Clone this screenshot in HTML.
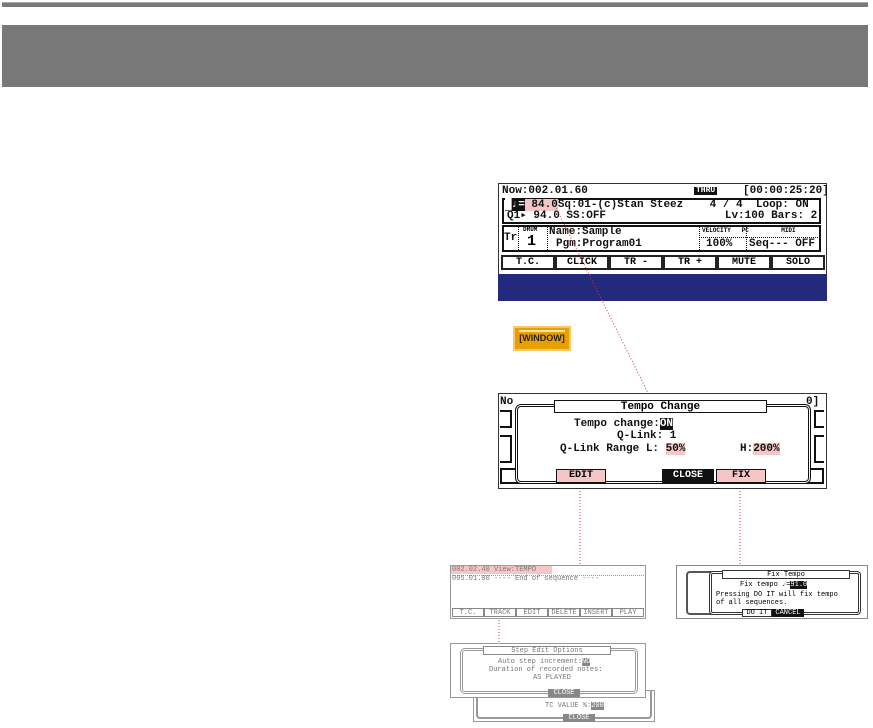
<!DOCTYPE html>
<html><head><meta charset="utf-8"><style>
*{margin:0;padding:0;box-sizing:border-box}
body{width:873px;height:728px;background:#fff;position:relative;overflow:hidden;font-family:"Liberation Mono",monospace}
.a{position:absolute}
.t{position:absolute;white-space:pre;line-height:1}
.m{font-size:11px;color:#111;font-weight:bold}
.g{color:#777;font-size:7px}
.pk{background:#f6c6c6}
.bk{background:#111;color:#fff}
.btn{position:absolute;border:2px solid #222;text-align:center;font-size:10px;line-height:11px;font-weight:bold}
.gb{position:absolute;border:1px solid #888;text-align:center;font-size:7px;line-height:8px;color:#777}
</style></head><body>
<div class="a" style="left:2px;top:2px;width:866px;height:5px;background:#7a7a7a;border-top:1px solid #aaa"></div>
<div class="a" style="left:2px;top:25px;width:866px;height:62px;background:#787878"></div>

<!-- main LCD -->
<div class="a" style="left:498px;top:183px;width:329px;height:92px;background:#fff;border:1px solid #333"></div>
<div class="a" style="left:498px;top:274px;width:329px;height:27px;background:#232a7c"></div>
<div class="t m" style="left:502px;top:186px">Now:002.01.60</div>
<div class="t" style="left:694px;top:187px;font-size:8px;background:#111;color:#fff;padding:0 2px;font-weight:bold">THRU</div>
<div class="t m" style="left:743px;top:186px">[00:00:25:20]</div>
<div class="a" style="left:502px;top:198px;width:319px;height:26px;border:2px solid #111"></div>
<div class="t m" style="left:505px;top:200px"><span class="bk">&#9608;&#9833;=</span><span class="pk"> 84.0</span>Sq:01-(c)Stan Steez    4 / 4  Loop: ON</div>
<div class="t m" style="left:507px;top:211px">Q1&#9656; 94.0 SS:OFF                  Lv:100 Bars: 2</div>
<div class="a" style="left:502px;top:225px;width:319px;height:27px;border:2px solid #111"></div>
<div class="t m" style="left:504px;top:233px">Tr</div>
<div class="a" style="left:518px;top:227px;height:23px;border-left:1px dotted #111"></div>
<div class="t" style="left:523px;top:227px;font-size:6px;font-weight:bold">DRUM</div>
<div class="t" style="left:527px;top:234px;font-size:15px;font-weight:bold">1</div>
<div class="a" style="left:547px;top:227px;height:23px;border-left:1px dotted #111"></div>
<div class="t m" style="left:549px;top:227px">Name:Sample</div>
<div class="t m" style="left:556px;top:239px">Pgm:Program01</div>
<div class="a" style="left:699px;top:227px;height:23px;border-left:1px dotted #111"></div>
<div class="t" style="left:702px;top:228px;font-size:6px;font-weight:bold">VELOCITY   PC         MIDI</div>
<div class="a" style="left:699px;top:237px;width:121px;border-top:1px dotted #111"></div>
<div class="t m" style="left:706px;top:239px">100%</div>
<div class="a" style="left:746px;top:227px;height:23px;border-left:1px dotted #111"></div>
<div class="t m" style="left:749px;top:239px">Seq--- OFF</div>
<div class="btn" style="left:501px;top:255px;width:54px;height:15px">T.C.</div>
<div class="btn" style="left:555px;top:255px;width:54px;height:15px">CLICK</div>
<div class="btn" style="left:609px;top:255px;width:54px;height:15px">TR -</div>
<div class="btn" style="left:663px;top:255px;width:54px;height:15px">TR +</div>
<div class="btn" style="left:717px;top:255px;width:54px;height:15px">MUTE</div>
<div class="btn" style="left:771px;top:255px;width:54px;height:15px">SOLO</div>

<!-- window button -->
<div class="a" style="left:513px;top:326px;width:58px;height:25px;background:#e8a000;border:2px solid #f6c86a;font-family:'Liberation Sans',sans-serif;font-size:9px;text-align:center;line-height:21px;color:#222;font-weight:bold"><div class="a" style="left:4px;top:2px;width:46px;height:2px;background:#f8e2b0"></div>[WINDOW]</div>

<!-- dotted lines -->
<svg class="a" style="left:0;top:0" width="873" height="728">
<g stroke="#d33" stroke-width="1" stroke-dasharray="1,2" fill="none">
<line x1="556" y1="208" x2="650" y2="397"/>
<line x1="580" y1="488" x2="580" y2="567"/>
<line x1="740" y1="488" x2="740" y2="567"/>
<line x1="499" y1="575" x2="499" y2="650"/>
</g></svg>

<!-- tempo change LCD -->
<div class="a" style="left:498px;top:393px;width:329px;height:96px;background:#fff;border:1px solid #333"></div>
<div class="a" style="left:500px;top:410px;width:12px;height:18px;border:2px solid #111;border-left:none"></div>
<div class="a" style="left:500px;top:435px;width:12px;height:28px;border:2px solid #111;border-left:none"></div>
<div class="a" style="left:814px;top:410px;width:10px;height:18px;border:2px solid #111;border-right:none"></div>
<div class="a" style="left:814px;top:435px;width:10px;height:28px;border:2px solid #111;border-right:none"></div>
<div class="a" style="left:500px;top:468px;width:324px;height:16px;border:2px solid #111"></div>
<div class="t m" style="left:500px;top:397px">No</div>
<div class="t m" style="left:806px;top:397px">0]</div>
<div class="a" style="left:515px;top:404px;width:296px;height:80px;border:3px double #111;border-radius:6px;background:#fff"></div>
<div class="a" style="left:554px;top:400px;width:213px;height:13px;border:1px solid #111;background:#fff;font-size:11px;text-align:center;line-height:12px;font-weight:bold">Tempo Change</div>
<div class="t m" style="left:574px;top:419px">Tempo change:<span class="bk">ON</span></div>
<div class="t m" style="left:617px;top:431px">Q-Link: 1</div>
<div class="t m" style="left:560px;top:444px">Q-Link Range L: <span class="pk">50%</span></div>
<div class="t m" style="left:740px;top:444px">H:<span class="pk">200%</span></div>
<div class="a" style="left:556px;top:469px;width:50px;height:14px;background:#f6c6c6;border:1px solid #111;font-size:10px;text-align:center;line-height:12px;font-weight:bold">EDIT</div>
<div class="a" style="left:662px;top:469px;width:52px;height:14px;background:#111;color:#fff;font-size:10px;text-align:center;line-height:14px;font-weight:bold">CLOSE</div>
<div class="a" style="left:716px;top:469px;width:50px;height:14px;background:#f6c6c6;border:1px solid #111;font-size:10px;text-align:center;line-height:12px;font-weight:bold">FIX</div>

<!-- small screen 1 -->
<div class="a" style="left:450px;top:565px;width:196px;height:54px;border:1px solid #999;background:#fff"></div>
<div class="a" style="left:451px;top:566px;width:101px;height:8px;background:#f6c6c6"></div>
<div class="t g" style="left:452px;top:567px">002.02.40 View:TEMPO</div>
<div class="a" style="left:452px;top:575px;width:192px;border-top:1px dotted #999"></div>
<div class="t g" style="left:452px;top:576px">005.01.00 ---- End of sequence ----</div>
<div class="gb" style="left:452px;top:608px;width:32px;height:9px">T.C.</div>
<div class="gb" style="left:484px;top:608px;width:32px;height:9px">TRACK</div>
<div class="gb" style="left:516px;top:608px;width:32px;height:9px">EDIT</div>
<div class="gb" style="left:548px;top:608px;width:32px;height:9px">DELETE</div>
<div class="gb" style="left:580px;top:608px;width:32px;height:9px">INSERT</div>
<div class="gb" style="left:612px;top:608px;width:32px;height:9px">PLAY</div>

<!-- small screen 3 (behind) -->
<div class="a" style="left:473px;top:690px;width:182px;height:32px;border:1px solid #999;background:#fff"></div>
<div class="a" style="left:476px;top:690px;width:176px;height:29px;border:2px solid #999;border-top:none;border-radius:0 0 4px 4px"></div>
<div class="t g" style="left:545px;top:703px">TC VALUE %:<span style="background:#888;color:#fff">200</span></div>
<div class="a" style="left:563px;top:714px;width:32px;height:8px;background:#888;color:#fff;font-size:7px;text-align:center;line-height:8px">CLOSE</div>

<!-- small screen 2 -->
<div class="a" style="left:450px;top:643px;width:196px;height:55px;border:1px solid #999;background:#fff"></div>
<div class="a" style="left:460px;top:648px;width:178px;height:46px;border:3px double #999;border-radius:5px;background:#fff"></div>
<div class="a" style="left:483px;top:646px;width:128px;height:9px;border:1px solid #888;background:#fff;font-size:7px;color:#777;text-align:center;line-height:8px">Step Edit Options</div>
<div class="t g" style="left:498px;top:659px">Auto step increment:<span style="background:#888;color:#fff">NO</span></div>
<div class="t g" style="left:489px;top:667px">Duration of recorded notes:</div>
<div class="t g" style="left:533px;top:675px">AS PLAYED</div>
<div class="a" style="left:548px;top:689px;width:32px;height:8px;background:#888;color:#fff;font-size:7px;text-align:center;line-height:8px">CLOSE</div>

<!-- right small screen -->
<div class="a" style="left:676px;top:565px;width:192px;height:54px;border:1px solid #888;background:#fff"></div>
<div class="a" style="left:686px;top:571px;width:174px;height:44px;border:2px solid #555;border-radius:4px;background:#fff"></div>
<div class="a" style="left:709px;top:571px;width:152px;height:44px;border:3px double #333;border-radius:4px;background:#fff"></div>
<div class="a" style="left:722px;top:570px;width:128px;height:9px;border:1px solid #333;background:#fff;font-size:7px;text-align:center;line-height:8px">Fix Tempo</div>
<div class="t" style="left:740px;top:582px;font-size:7px">Fix tempo &#9833;=<span class="bk">91.0</span></div>
<div class="t" style="left:716px;top:592px;font-size:7px">Pressing DO IT will fix tempo</div>
<div class="t" style="left:716px;top:600px;font-size:7px">of all sequences.</div>
<div class="a" style="left:742px;top:609px;width:30px;height:8px;border:1px solid #333;background:#fff;font-size:7px;text-align:center;line-height:7px">DO IT</div>
<div class="a" style="left:772px;top:609px;width:32px;height:8px;background:#111;color:#fff;font-size:7px;text-align:center;line-height:8px">CANCEL</div>
</body></html>
